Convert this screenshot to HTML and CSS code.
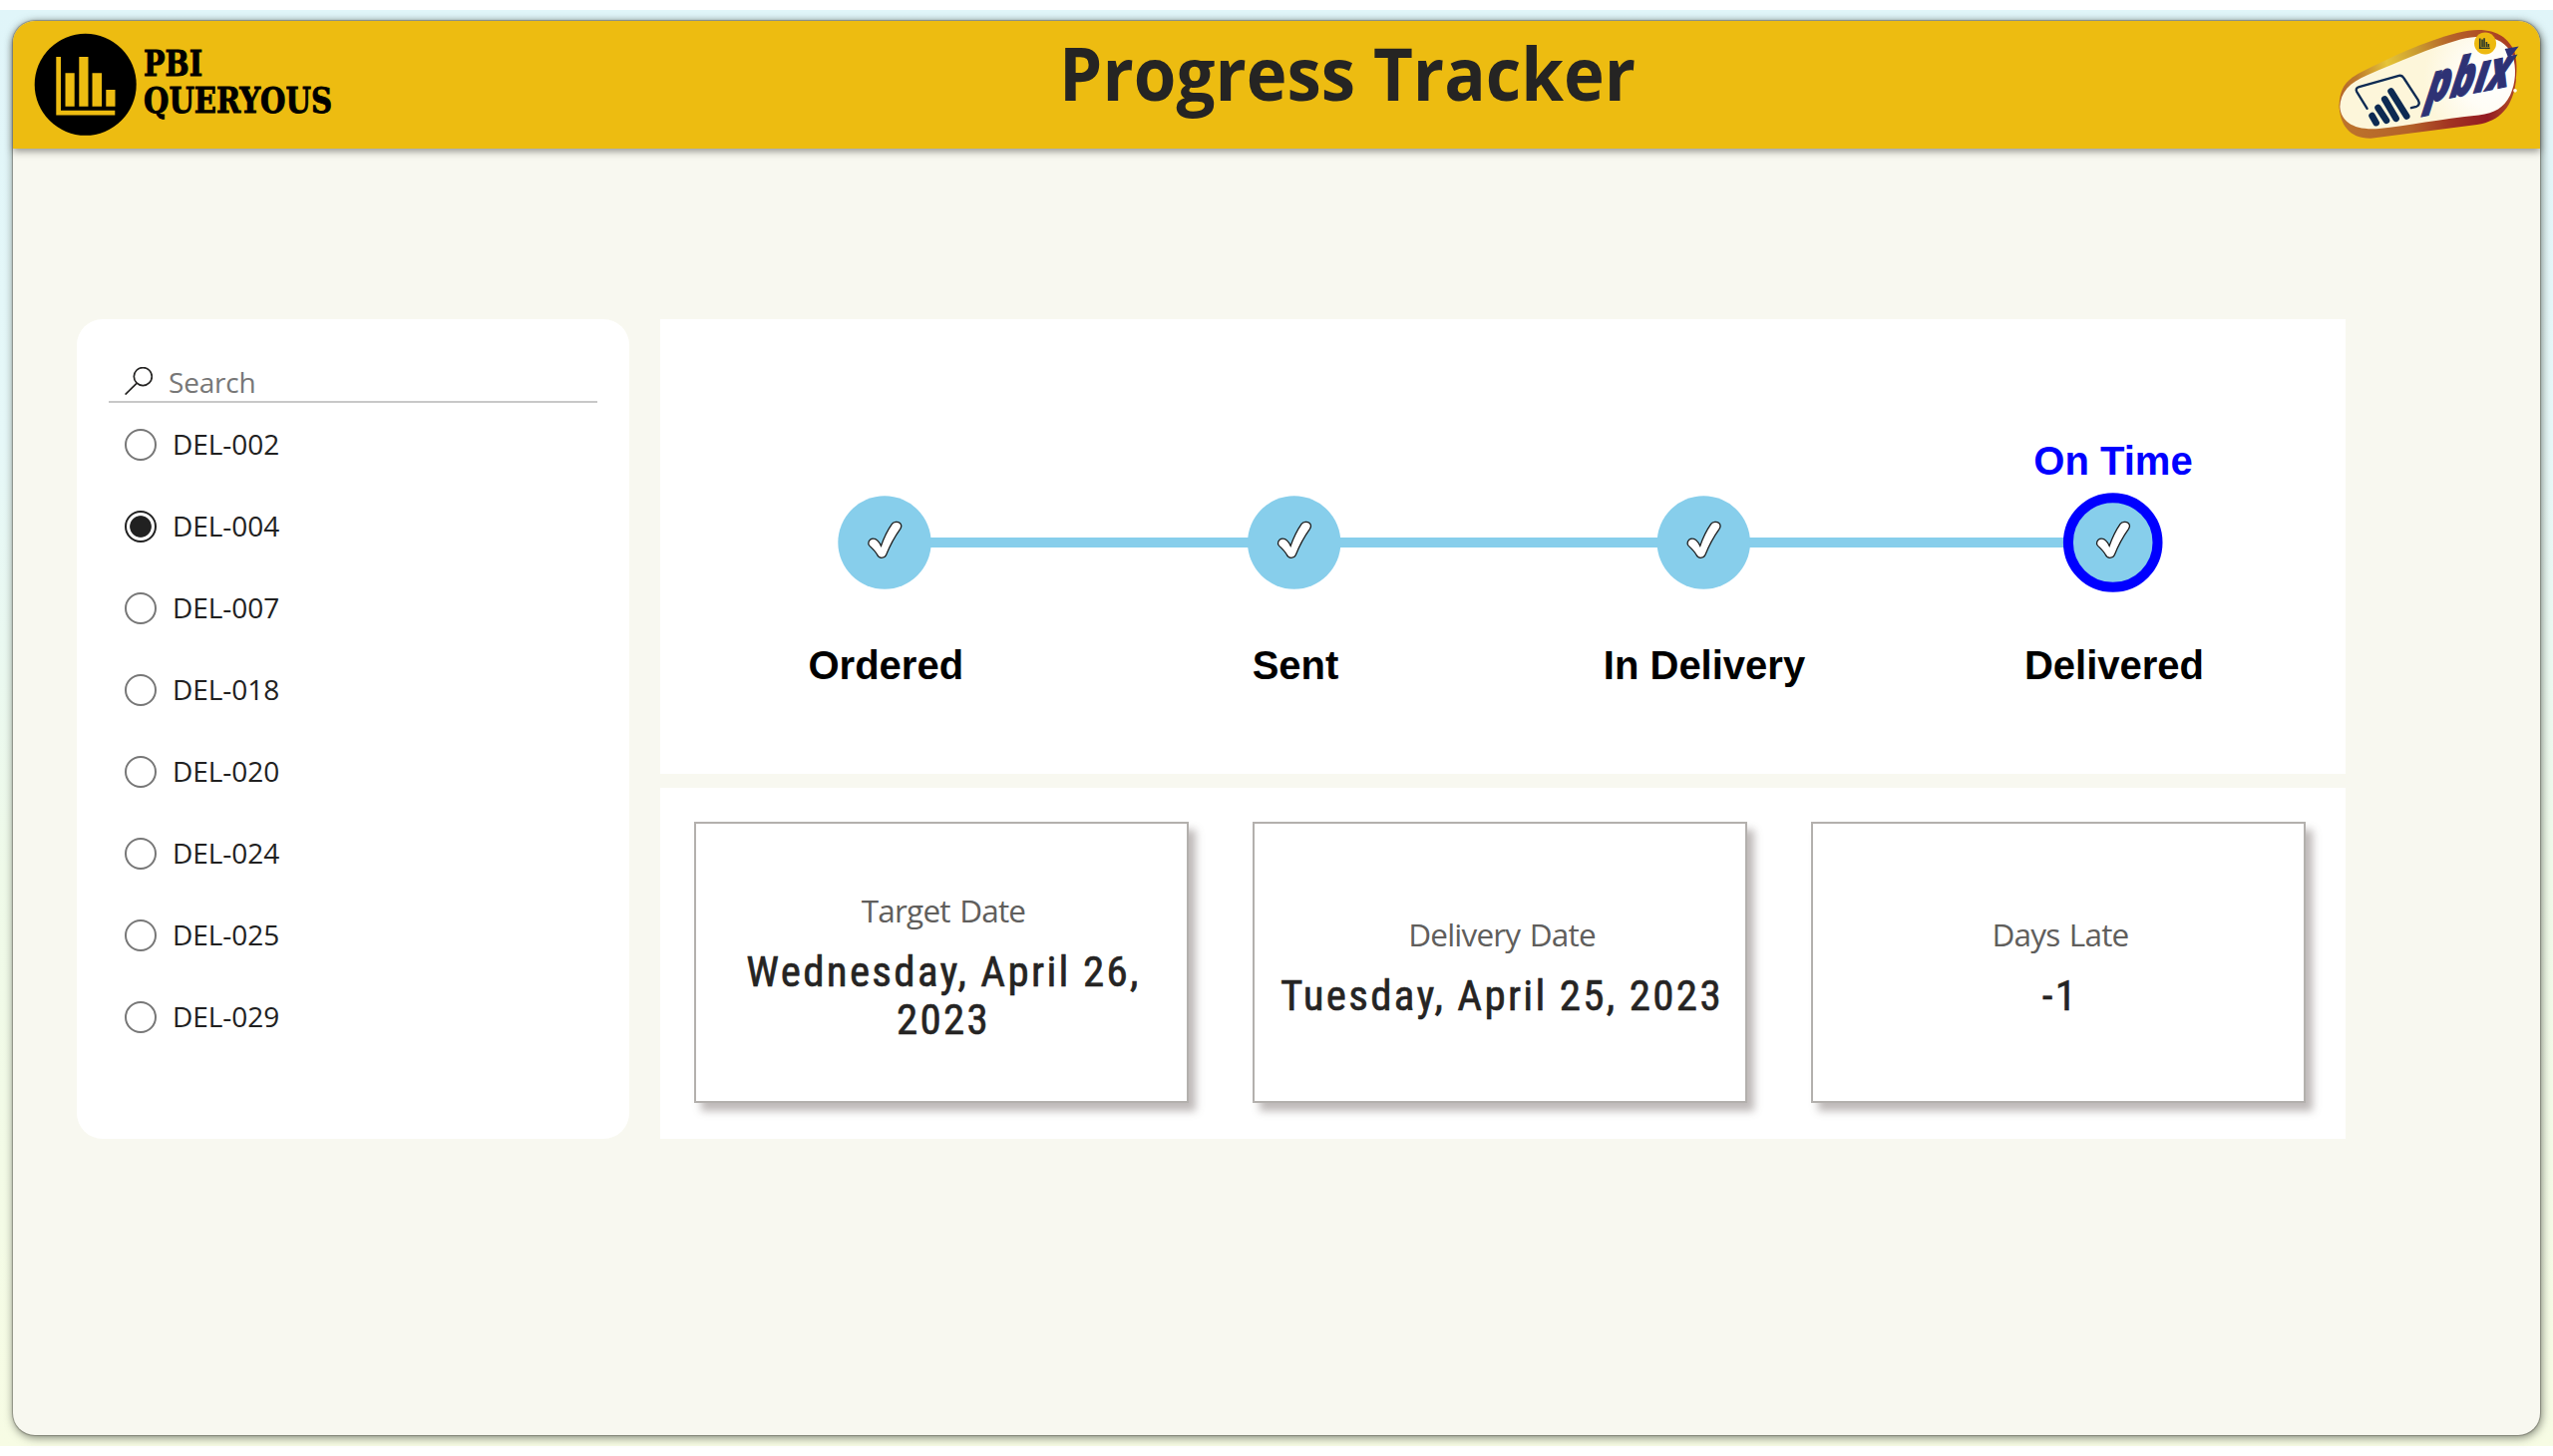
FILE: index.html
```
<!DOCTYPE html>
<html lang="en">
<head>
<meta charset="utf-8">
<title>Progress Tracker</title>
<link rel="stylesheet" href="styles.css">
</head>
<body>
<div class="canvas">
  <div class="page">
    <header class="header">
      <svg class="brand" viewBox="30 30 306 110" role="img" aria-label="PBI Queryous">
        <circle cx="85.7" cy="84.8" r="51"/>
        <path class="brand-mark" d="M56.3 57H61V110.7H115.3V115.4H56.3zM65.5 73.3h9.2v33.4h-9.2zM79.3 57h9.2v49.7h-9.2zM92.5 73.3h9.6v33.4h-9.6zM106.3 90h9.2v16.7h-9.2z"/>
        <text class="brand-text" x="144" y="76" textLength="59" lengthAdjust="spacingAndGlyphs">PBI</text>
        <text class="brand-text" x="144" y="113" textLength="189" lengthAdjust="spacingAndGlyphs">QUERYOUS</text>
      </svg>
      <h1 class="title">Progress Tracker</h1>
      <svg class="badge" viewBox="70 85 550 335" role="img" aria-label="pbix">
        <defs>
          <linearGradient id="rim" x1="75" y1="300" x2="610" y2="180" gradientUnits="userSpaceOnUse">
            <stop offset="0" stop-color="#b5652a"/>
            <stop offset=".12" stop-color="#bd7a2c"/>
            <stop offset=".3" stop-color="#e6c437"/>
            <stop offset=".48" stop-color="#c99a30"/>
            <stop offset=".66" stop-color="#b5642a"/>
            <stop offset="1" stop-color="#a93a22"/>
          </linearGradient>
          <linearGradient id="rimLow" x1="80" y1="0" x2="600" y2="0" gradientUnits="userSpaceOnUse">
            <stop offset="0" stop-color="#bd742c"/>
            <stop offset=".4" stop-color="#b46229"/>
            <stop offset=".62" stop-color="#a33522"/>
            <stop offset=".85" stop-color="#931b22"/>
            <stop offset="1" stop-color="#b04a25"/>
          </linearGradient>
          <radialGradient id="face" cx="540" cy="235" r="210" gradientUnits="userSpaceOnUse">
            <stop offset="0" stop-color="#fff"/>
            <stop offset=".45" stop-color="#fffdf6"/>
            <stop offset="1" stop-color="#fdf6da"/>
          </radialGradient>
        </defs>
        <path fill="url(#rimLow)" d="M75 315C75 375 105 418 170 417L490 376C560 366 600 320 608 240L560 180L100 270z"/>
        <path fill="url(#rim)" d="M75 325C74 270 92 243 140 218C230 172 330 125 430 99C530 74 580 105 603 155C613 190 611 235 600 275C580 320 560 330 500 340L130 380C95 370 78 350 75 325z"/>
        <path fill="url(#face)" d="M77 322C79 278 105 249 160 226C250 188 350 144 440 119C530 96 575 122 597 165C610 205 607 250 590 287C570 325 545 341 495 347C380 359 280 378 195 388C120 394 80 368 77 322z"/>
        <g fill="none" stroke="#0d2a52" stroke-linecap="round" stroke-linejoin="round">
          <path stroke-width="7" d="M159 327L128 277Q122 266 135 262L255 228Q264 226 270 236L313 302Q320 316 308 321L292 325"/>
          <path stroke-width="20" d="M174 349L186 370M192 325L217 363M212 299L246 357M231 275L278 350"/>
        </g>
        <circle cx="515" cy="131" r="33" fill="#edb90f"/>
        <path fill="none" stroke="#2f3a2a" stroke-width="5" d="M499 116V145H529M506 141V119M512 141V115M519 141V126M525 141V132"/>
        <text class="badge-text" transform="matrix(.97 -.2 -.22 1.2 334 311)" textLength="258" lengthAdjust="spacingAndGlyphs">pbıx</text>
        <path fill="#2e3275" d="M586 178L616 140L574 147z"/>
        <circle cx="605" cy="273" r="5.5" fill="#fffbe9"/>
      </svg>
    </header>

    <main class="content">
      <section class="slicer">
        <div class="search">
          <svg class="search-icon" viewBox="0 0 28 28"><circle cx="18.3" cy="9.6" r="9"/><path d="M12 16.4L.6 27.6"/></svg>
          <span>Search</span>
        </div>
        <ul class="options">
          <li class="option"><i class="radio"></i><span>DEL-002</span></li>
          <li class="option"><i class="radio radio-on"></i><span>DEL-004</span></li>
          <li class="option"><i class="radio"></i><span>DEL-007</span></li>
          <li class="option"><i class="radio"></i><span>DEL-018</span></li>
          <li class="option"><i class="radio"></i><span>DEL-020</span></li>
          <li class="option"><i class="radio"></i><span>DEL-024</span></li>
          <li class="option"><i class="radio"></i><span>DEL-025</span></li>
          <li class="option"><i class="radio"></i><span>DEL-029</span></li>
        </ul>
      </section>

      <div class="visuals">
        <svg class="tracker" viewBox="0 0 1690 456">
          <defs>
            <path id="tick" d="M-16.2 1.2C-16.3-2.2-13.6-4-10.9-3.8C-7.6-3.8-5.6-.8-3.5 3.4C-.8-4.5 3.2-12.6 7.4-18.6C9.2-21.2 13.4-21.2 15.4-19.6C17.4-17.8 17-15.6 15.6-13.4C9.6-5 5 4 1.6 12.4C.8 14.6-.2 15.3-3 15.3C-5.6 15.3-6.4 14.4-7.4 12.2C-9.2 9-11.6 6.6-14.8 3.6C-15.6 2.8-16.1 2.2-16.2 1.2z"/>
          </defs>
          <path class="track" d="M225 224H1457"/>
          <circle class="step" cx="225" cy="224" r="46.7"/>
          <circle class="step" cx="635.7" cy="224" r="46.7"/>
          <circle class="step" cx="1046.3" cy="224" r="46.7"/>
          <circle class="step step-current" cx="1456.7" cy="224" r="44.8"/>
          <use class="tick" href="#tick" x="225" y="224"/>
          <use class="tick" href="#tick" x="635.7" y="224"/>
          <use class="tick" href="#tick" x="1046.3" y="224"/>
          <use class="tick" href="#tick" x="1456.7" y="224"/>
          <text class="step-label status" x="1457" y="155.5">On Time</text>
          <text class="step-label" x="226.3" y="361">Ordered</text>
          <text class="step-label" x="637" y="361">Sent</text>
          <text class="step-label" x="1047" y="361">In Delivery</text>
          <text class="step-label" x="1458" y="361">Delivered</text>
        </svg>

        <section class="cards">
          <article class="card"><div class="card-label">Target Date</div><div class="card-value">Wednesday, April 26, 2023</div></article>
          <article class="card"><div class="card-label">Delivery Date</div><div class="card-value">Tuesday, April 25, 2023</div></article>
          <article class="card"><div class="card-label">Days Late</div><div class="card-value">-1</div></article>
        </section>
      </div>
    </main>
  </div>
</div>
</body>
</html>
```
FILE: styles.css
```
* { box-sizing: border-box; }

body {
  margin: 0;
  padding: 10px 0;
  background: #fff;
  font-family: "Open Sans", "Noto Sans", sans-serif;
  color: #252423;
}

.canvas {
  height: 1440px;
  padding: 11px 13px 11px;
  background: linear-gradient(#e0f5f9 0%, #e6f8f8 30%, #effae9 60%, #f7fce4 100%);
}

.page {
  height: 1418px;
  border-radius: 22px;
  background: #f8f8f0;
  box-shadow: 0 0 1px 1px rgba(110, 110, 100, .6), 1px 2px 8px 1px rgba(60, 65, 55, .6);
}

.header {
  display: flex;
  justify-content: space-between;
  align-items: flex-start;
  height: 128px;
  padding: 7px 20px 0 17px;
  border-radius: 22px 22px 0 0;
  background: #edbc11;
  box-shadow: 0 3px 7px rgba(60, 60, 55, .5);
}

.brand { width: 306px; height: 110px; margin-top: 2px; overflow: visible; }
.brand-mark { fill: #edbc11; }
.brand-text {
  font: 700 36px "DejaVu Serif Condensed", "DejaVu Serif", serif;
  stroke: #000;
  stroke-width: .9;
}

.title {
  margin: 2px 0 0 23px;
  font-size: 74px;
  font-weight: 700;
  line-height: 86px;
  white-space: nowrap;
  transform: scaleX(.932);
}

.badge { width: 183px; height: 112px; overflow: visible; }
.badge-text {
  font: italic 800 138px "Open Sans", sans-serif;
  fill: #2e3275;
  stroke: #2e3275;
  stroke-width: 3;
}

.content {
  display: flex;
  gap: 31px;
  padding: 171px 0 0 64px;
}

.slicer {
  width: 554px;
  height: 822px;
  padding: 44px 32px 0;
  border-radius: 26px;
  background: #fff;
  font-size: 28px;
}

.search {
  display: flex;
  gap: 16px;
  width: 490px;
  height: 40px;
  padding-left: 16px;
  border-bottom: 2px solid #c8c8c8;
  line-height: 38px;
  letter-spacing: -.2px;
  color: #777;
}

.search-icon {
  width: 28px;
  height: 28px;
  margin-top: 4px;
  fill: none;
  stroke: #252423;
  stroke-width: 1.7;
}

.options { margin: 1px 0 0; padding: 0 0 0 16px; list-style: none; }

.option {
  display: flex;
  align-items: center;
  gap: 16px;
  height: 82px;
  letter-spacing: -.05px;
  color: #212121;
}

.option span { padding-bottom: 2px; }

.radio {
  width: 32px;
  height: 32px;
  border: 2px solid #777;
  border-radius: 50%;
}

.radio-on {
  border-color: #212121;
  background: radial-gradient(circle, #212121 10.4px, transparent 11.2px);
}

.visuals {
  display: flex;
  flex-direction: column;
  gap: 14px;
  width: 1690px;
}

.tracker { width: 1690px; height: 456px; background: #fff; }
.track { stroke: #87ceeb; stroke-width: 10; }
.step { fill: #87ceeb; }
.step-current { stroke: #00f; stroke-width: 10; }
.tick { fill: #fff; stroke: #1c1c1c; stroke-width: 1.3; }

.step-label {
  font: 700 40px "Liberation Sans", Arial, sans-serif;
  text-anchor: middle;
  fill: #000;
}

.status { fill: #00f; }

.cards {
  display: flex;
  gap: 64px;
  height: 352px;
  padding: 34px;
  background: #fff;
}

.card {
  display: flex;
  flex-direction: column;
  justify-content: center;
  gap: 15px;
  width: 496px;
  height: 282px;
  padding: 6px 14px 0 18px;
  border: 2px solid #b3b0ad;
  background: #fff;
  box-shadow: 7px 8px 8px rgba(100, 88, 86, .42);
  text-align: center;
}

.card-label {
  font-size: 31.5px;
  line-height: 44px;
  letter-spacing: -.8px;
  word-spacing: 2px;
  color: #605e5c;
}

.card-value {
  font: 400 43px/48px "Roboto Condensed", Roboto, sans-serif;
  letter-spacing: 2.3px;
  -webkit-text-stroke: .6px #252423;
}
```
